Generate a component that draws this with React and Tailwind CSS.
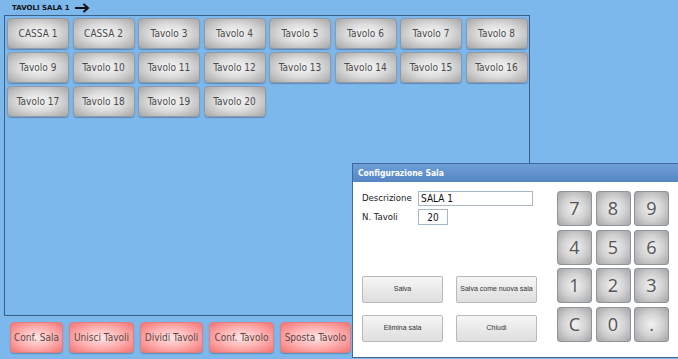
const tables = [
  'CASSA 1', 'CASSA 2', 'Tavolo 3', 'Tavolo 4', 'Tavolo 5', 'Tavolo 6', 'Tavolo 7', 'Tavolo 8',
  'Tavolo 9', 'Tavolo 10', 'Tavolo 11', 'Tavolo 12', 'Tavolo 13', 'Tavolo 14', 'Tavolo 15', 'Tavolo 16',
  'Tavolo 17', 'Tavolo 18', 'Tavolo 19', 'Tavolo 20',
];

const actions = [
  { label: 'Conf. Sala', w: 'w-[53px]' },
  { label: 'Unisci Tavoli', w: 'w-[65px]' },
  { label: 'Dividi Tavoli', w: 'w-[63px]' },
  { label: 'Conf. Tavolo', w: 'w-[65px]' },
  { label: 'Sposta Tavolo', w: 'w-[71px]' },
];

const keys = ['7', '8', '9', '4', '5', '6', '1', '2', '3', 'C', '0', '.'];

const TableButton = ({ label }) => (
  <button className="h-[31px] w-[62px] rounded-[4px] border border-[#8f9aa6] bg-[radial-gradient(ellipse_at_center,#f8f8f8_0%,#dddddd_45%,#a6a6a6_100%)] text-[10px] text-[#4a4a4a] shadow-[0_1px_1px_rgba(40,70,110,0.4)]">
    {label}
  </button>
);

const ActionButton = ({ label, w }) => (
  <button className={`${w} h-[31px] rounded-[4px] border border-[#e07f7f] bg-[radial-gradient(ellipse_at_center,#ffe6e6_0%,#ffb0b0_50%,#f27474_100%)] text-[10px] text-[#5a4848] shadow-[0_1px_1px_rgba(40,70,110,0.4)]`}>
    {label}
  </button>
);

const DialogButton = ({ label }) => (
  <button className="h-[27px] w-[81px] rounded-[2px] border border-[#b9b9b9] bg-gradient-to-b from-[#f6f6f6] to-[#dedede] font-['Liberation_Sans',sans-serif] text-[7px] text-[#333]">
    {label}
  </button>
);

export default function App() {
  return (
    <div className="relative h-[359px] w-[678px] overflow-hidden bg-[#7db8ec] font-['DejaVu_Sans_Condensed','DejaVu_Sans',sans-serif]">
      <div className="flex h-[15px] items-center gap-[5px] pl-[12px] pt-[1px]">
        <span className="font-['DejaVu_Sans',sans-serif] text-[7px] font-bold text-[#111]">TAVOLI SALA 1</span>
        <svg width="15" height="10" viewBox="0 0 15 10">
          <path d="M0 5h13M8.5 1l4.5 4-4.5 4" fill="none" stroke="#111" strokeWidth="2" />
        </svg>
      </div>

      <div className="ml-[4px] h-[301px] w-[526px] border border-[#3b5f87] pl-[2px] pt-[2px]">
        <div className="grid grid-cols-[repeat(8,62px)] gap-x-[3.5px] gap-y-[3px]">
          {tables.map((t) => (
            <TableButton key={t} label={t} />
          ))}
        </div>
      </div>

      <div className="mt-[6px] flex gap-[6px] pl-[10px]">
        {actions.map((a) => (
          <ActionButton key={a.label} {...a} />
        ))}
      </div>

      <div className="absolute left-[352px] top-[163px] h-[195px] w-[327px] border border-[#3d6a9e] bg-white">
        <div className="flex h-[18px] items-center bg-gradient-to-b from-[#6f9fd8] to-[#5586c4] pl-[5px] text-[8.5px] font-bold text-white">
          Configurazione Sala
        </div>
        <div className="flex">
          <div className="w-[204px] pl-[9px] pt-[9px]">
            <div className="flex items-center">
              <span className="w-[56px] text-[9.5px] text-[#222]">Descrizione</span>
              <div className="flex h-[15px] w-[115px] items-center border border-[#a9b6c4] pl-[2px] text-[10px] text-[#111]">
                SALA 1
              </div>
            </div>
            <div className="mt-[3px] flex items-center">
              <span className="w-[56px] text-[9.5px] text-[#222]">N. Tavoli</span>
              <div className="flex h-[16px] w-[30px] items-center justify-center border border-[#a9b6c4] text-[10px] text-[#111]">
                20
              </div>
            </div>
            <div className="mt-[51px] grid grid-cols-[81px_81px] gap-x-[13px] gap-y-[12px]">
              <DialogButton label="Salva" />
              <DialogButton label="Salva come nuova sala" />
              <DialogButton label="Elimina sala" />
              <DialogButton label="Chiudi" />
            </div>
          </div>
          <div className="grid grid-cols-[repeat(3,35px)] gap-[3.5px] pt-[9px]">
            {keys.map((k) => (
              <button
                key={k}
                className="h-[35px] w-[35px] rounded-[3px] border border-[#8c949c] bg-[radial-gradient(ellipse_at_center,#f2f2f2_0%,#d2d2d2_50%,#a4a4a4_100%)] font-['Open_Sans',sans-serif] text-[18px] text-[#555]"
              >
                {k}
              </button>
            ))}
          </div>
        </div>
      </div>
    </div>
  );
}
